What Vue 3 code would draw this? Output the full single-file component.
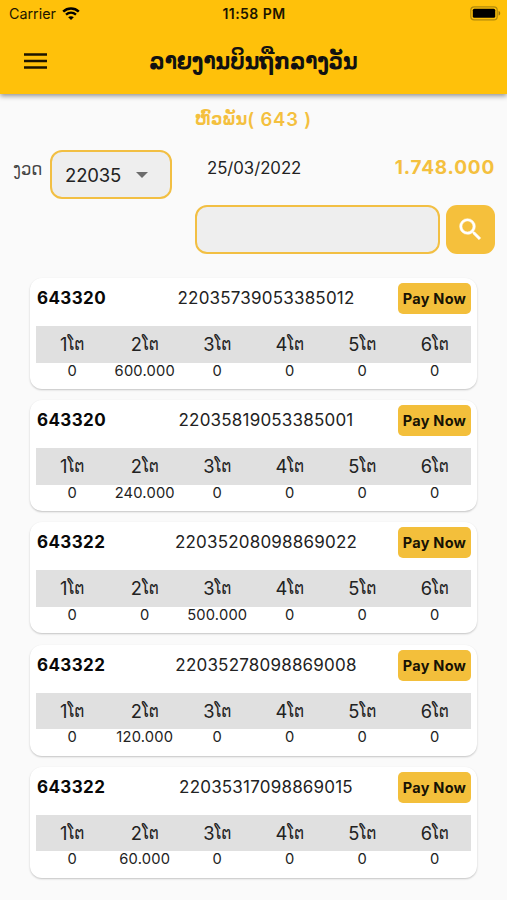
<script setup>
const bills = [
  { number: '643320', code: '22035739053385012', amounts: ['0', '600.000', '0', '0', '0', '0'] },
  { number: '643320', code: '22035819053385001', amounts: ['0', '240.000', '0', '0', '0', '0'] },
  { number: '643322', code: '22035208098869022', amounts: ['0', '0', '500.000', '0', '0', '0'] },
  { number: '643322', code: '22035278098869008', amounts: ['0', '120.000', '0', '0', '0', '0'] },
  { number: '643322', code: '22035317098869015', amounts: ['0', '60.000', '0', '0', '0', '0'] },
]
</script>

<template>
  <div class="screen">
    <header class="top">
      <div class="status">
        <div class="carrier">
          <span>Carrier</span>
          <svg width="18" height="14" viewBox="0 0 18 14">
            <path d="M1.2 4.6C5.6.4 12.4.4 16.8 4.6" fill="none" stroke="#000" stroke-width="2.5" />
            <path d="M4 7.7c2.9-2.6 7.1-2.6 10 0" fill="none" stroke="#000" stroke-width="2.3" />
            <path d="M6.2 10.2c1.6-1.3 4-1.3 5.6 0L9 13z" />
          </svg>
        </div>
        <div class="time">11:58 PM</div>
        <svg class="battery" width="31" height="15" viewBox="0 0 31 15">
          <rect x=".8" y=".8" width="26.4" height="13" rx="3.4" fill="none" stroke="#b18a0c" stroke-width="1.2" />
          <rect x="2.8" y="2.8" width="22.4" height="9" rx="1.5" />
          <path d="M28.6 5v4.6c2.2-.7 2.2-3.9 0-4.6z" fill="#98740a" />
        </svg>
      </div>
      <div class="bar">
        <svg class="menu" width="23" height="16" viewBox="0 0 23 16">
          <path d="M0 1.4h23M0 7.9h23M0 14.4h23" stroke="#1c1500" stroke-width="2.5" />
        </svg>
        <h1>ລາຍງານບິນຖືກລາງວັນ</h1>
      </div>
    </header>

    <div class="heading"><span class="lao">ຫົວພັນ</span><span class="count">( 643 )</span></div>

    <div class="filters">
      <span class="label">ງວດ</span>
      <div class="select">
        <span>22035</span>
        <svg width="12" height="6" viewBox="0 0 12 6"><path d="M0 0h12L6 6z" fill="#6c6c6c" /></svg>
      </div>
      <span class="date">25/03/2022</span>
      <span class="total">1.748.000</span>
    </div>

    <div class="search">
      <input type="text" class="field" />
      <button class="go">
        <svg width="29" height="29" viewBox="0 0 24 24"><path fill="#fff" stroke="#fff" stroke-width=".4" d="M15.5 14h-.79l-.28-.27A6.47 6.47 0 0 0 16 9.5 6.5 6.5 0 1 0 9.5 16c1.61 0 3.09-.59 4.23-1.57l.27.28v.79l5 4.99L20.49 19l-4.99-5zm-6 0C7.01 14 5 11.99 5 9.5S7.01 5 9.5 5 14 7.01 14 9.5 11.99 14 9.5 14z" /></svg>
      </button>
    </div>

    <main class="list">
      <article v-for="bill in bills" :key="bill.code" class="card">
        <div class="info">
          <b class="number">{{ bill.number }}</b>
          <span class="code">{{ bill.code }}</span>
          <button class="pay">Pay Now</button>
        </div>
        <div class="row head">
          <span v-for="n in 6" :key="n" class="cell">{{ n }}<span class="lao">ໂຕ</span></span>
        </div>
        <div class="row values">
          <span v-for="(amount, i) in bill.amounts" :key="i" class="cell">{{ amount }}</span>
        </div>
      </article>
    </main>
  </div>
</template>

<style>
body { background: #fafafa; }
</style>

<style scoped>
.screen {
  width: 507px;
  height: 900px;
  overflow: hidden;
  background: #fafafa;
  color: #222;
  font-family: Inter, "DejaVu Sans", sans-serif;
}
.screen * { box-sizing: border-box; }
button { border: 0; padding: 0; font-family: inherit; }
.top {
  height: 94px;
  background: #ffc10a;
  box-shadow: 0 2px 5px rgba(0, 0, 0, .42);
}
.status {
  height: 27px;
  padding: 0 6px 0 9px;
  display: grid;
  grid-template-columns: 1fr auto 1fr;
  align-items: center;
  color: #1c1500;
}
.carrier { display: flex; align-items: center; gap: 6px; font-size: 14.3px; }
.time { padding-right: 2px; font-size: 14px; font-weight: 600; letter-spacing: .45px; }
.battery { justify-self: end; }
.bar {
  height: 67px;
  padding: 0 24px;
  display: grid;
  grid-template-columns: 23px 1fr 23px;
  align-items: center;
}
h1 {
  margin: 0;
  text-align: center;
  white-space: nowrap;
  font: 700 22.2px/30px "DejaVu Sans Condensed", "DejaVu Sans", sans-serif;
  font-stretch: condensed;
  color: #111;
}
.heading {
  height: 50px;
  display: flex;
  justify-content: center;
  align-items: center;
  color: #f4c03e;
  font-weight: 600;
}
.heading .lao {
  font: 700 17.4px/24px "DejaVu Sans Condensed", "DejaVu Sans", sans-serif;
  font-stretch: condensed;
}
.count { font-size: 18.5px; letter-spacing: .8px; }
.filters {
  height: 61px;
  padding: 6px 12px 0 13px;
  display: flex;
  align-items: flex-start;
}
.label {
  width: 37px;
  font: 18.2px/37px "DejaVu Sans Condensed", "DejaVu Sans", sans-serif;
  font-stretch: condensed;
  color: #444;
  white-space: nowrap;
}
.select {
  width: 122px;
  height: 49px;
  padding: 0 22px 0 13px;
  display: flex;
  align-items: center;
  justify-content: space-between;
  border: 2px solid #f2bf43;
  border-radius: 12px;
  background: #eee;
  font-size: 18.5px;
  line-height: 46px;
  letter-spacing: -.15px;
}
.date { margin-left: 35px; font-size: 16.8px; line-height: 36px; letter-spacing: -.05px; }
.total { margin-left: auto; font-size: 19px; font-weight: 700; line-height: 36px; letter-spacing: .8px; color: #f4c03e; }
.search { padding: 0 12px 0 195px; display: flex; gap: 6px; }
.field {
  width: 245px;
  height: 49px;
  border: 2px solid #f2bf43;
  border-radius: 12px;
  background: #eee;
}
.go {
  width: 49px;
  height: 49px;
  display: grid;
  place-items: center;
  border-radius: 11px;
  background: #f5c03c;
}
.list { padding: 24px 30px 0; display: flex; flex-direction: column; gap: 11.2px; }
.card {
  height: 111px;
  padding: 5px 6px 0;
  border-radius: 12px;
  background: #fff;
  box-shadow: 0 1px 2px rgba(0, 0, 0, .22);
}
.info {
  height: 43px;
  display: grid;
  grid-template-columns: 98px 1fr 73px;
  align-items: start;
  line-height: 31px;
}
.number { padding-left: 1px; color: #080808; font-size: 17px; font-weight: 700; letter-spacing: .4px; }
.code { text-align: center; font-size: 17px; letter-spacing: .2px; }
.pay {
  height: 31px;
  border-radius: 5px;
  background: #f3bf3b;
  color: #171204;
  font-size: 14.5px;
  font-weight: 700;
  letter-spacing: .25px;
  white-space: nowrap;
}
.row { display: grid; grid-template-columns: repeat(6, 1fr); text-align: center; }
.head { height: 36.5px; background: #e0e0e0; font-size: 18.3px; line-height: 37px; }
.head .cell { display: flex; justify-content: center; }
.head .lao {
  font-family: "DejaVu Sans Condensed", "DejaVu Sans", sans-serif;
  font-stretch: condensed;
  font-size: 17px;
}
.values { font-size: 14.7px; line-height: 17px; letter-spacing: .2px; }
</style>
